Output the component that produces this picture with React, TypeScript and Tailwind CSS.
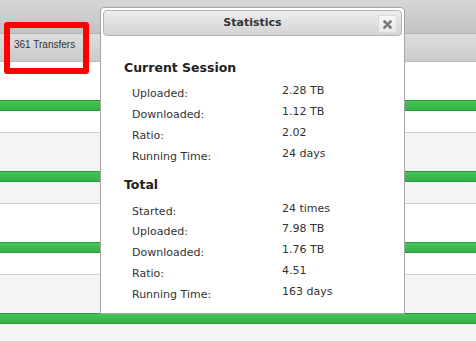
import React from "react";

const session = [
  ["Uploaded:", "2.28 TB"],
  ["Downloaded:", "1.12 TB"],
  ["Ratio:", "2.02"],
  ["Running Time:", "24 days"],
];
const total = [
  ["Started:", "24 times"],
  ["Uploaded:", "7.98 TB"],
  ["Downloaded:", "1.76 TB"],
  ["Ratio:", "4.51"],
  ["Running Time:", "163 days"],
];

function Row({ bg, first }: { bg: string; first?: boolean }) {
  return (
    <div className={`${first ? "" : "border-t border-[#d2d2d2]"} ${bg}`}>
      <div className="h-[38px]" />
      <div className="h-[11px] border-y border-[#2b9a3b] bg-gradient-to-b from-[#43c556] to-[#35b048]" />
      <div className="h-[21px]" />
    </div>
  );
}

function StatRows({ rows }: { rows: string[][] }) {
  return (
    <div className="flex flex-col">
      {rows.map(([l, v], i) => (
        <div key={i} className="flex h-[20.9px] items-start pl-[29px] text-[11px] leading-[20px] text-[#333]">
          <span className="w-[150px] mt-[2px]">{l}</span>
          <span className="-mt-[1px]">{v}</span>
        </div>
      ))}
    </div>
  );
}

export default function App() {
  return (
    <div
      className="relative w-[476px] h-[341px] overflow-hidden bg-[#f4f4f4]"
      style={{ fontFamily: '"DejaVu Sans", Verdana, sans-serif' }}
    >
      <div className="h-[34px] bg-gradient-to-b from-[#d6d6d6] to-[#c3c3c3] border-b border-[#b5b5b5]" />
      <div className="h-[28px] bg-gradient-to-b from-[#dedede] to-[#cbcbcb] border-b border-[#bdbdbd] flex items-center pl-[14px]">
        <span className="text-[10px] text-[#333] mb-[6px]" style={{ fontFamily: '"Liberation Sans", Arial, sans-serif' }}>
          361 Transfers
        </span>
      </div>
      <Row bg="bg-white" first />
      <Row bg="bg-[#f4f4f4]" />
      <Row bg="bg-white" />
      <Row bg="bg-[#f4f4f4]" />

      {/* annotation box */}
      <div className="absolute left-[4px] top-[22px] w-[85px] h-[52px] border-[6px] border-[#ff0000] rounded-[3px]" />

      {/* dialog */}
      <div className="absolute left-[100px] top-[7px] w-[305px] h-[307px] bg-white border border-[#a6a6a6] rounded-t-[4px] p-[2px]">
        <div className="relative h-[26px] rounded-[4px] border border-[#b4b4b4] bg-gradient-to-b from-[#eeeeee] to-[#d3d3d3] flex items-center justify-center">
          <span className="text-[11px] font-bold text-[#333]">Statistics</span>
          <div className="absolute right-[4px] top-[4px] w-[19px] h-[18px] rounded-[2px] border border-[#dcdcdc] bg-gradient-to-b from-[#f7f7f7] to-[#e9e9e9] flex items-center justify-center">
            <svg width="9" height="9" viewBox="0 0 9 9">
              <path d="M1.5 1.5 L7.5 7.5 M7.5 1.5 L1.5 7.5" stroke="#7a7a7a" strokeWidth="2.6" strokeLinecap="square" />
            </svg>
          </div>
        </div>
        <div className="pl-[21px] pt-[24px]">
          <div className="text-[12.5px] font-bold text-[#222] leading-[16px] mb-[6px]">Current Session</div>
        </div>
        <StatRows rows={session} />
        <div className="pl-[21px] pt-[11px]">
          <div className="text-[12.5px] font-bold text-[#222] leading-[16px] mb-[7px]">Total</div>
        </div>
        <StatRows rows={total} />
      </div>
    </div>
  );
}
